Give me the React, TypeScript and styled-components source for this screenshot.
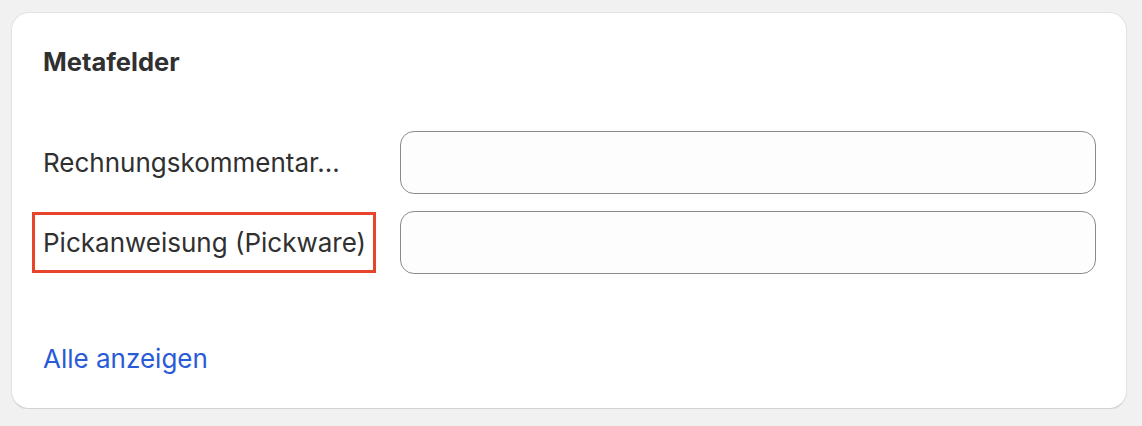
import React from "react";
import styled, { createGlobalStyle } from "styled-components";

const GlobalStyle = createGlobalStyle`
  html, body {
    margin: 0;
    padding: 0;
    background: #f1f1f1;
    font-family: Inter, "Noto Sans", "Liberation Sans", sans-serif;
    -webkit-font-smoothing: antialiased;
  }
`;

const Page = styled.div`
  padding: 12px 15px 0 11px;
`;

const Card = styled.section`
  box-sizing: border-box;
  width: 1116px;
  height: 397px;
  background: #ffffff;
  border: 1px solid #e3e3e3;
  border-bottom-color: #d2d2d2;
  border-radius: 18px;
  box-shadow: 0 1px 1px rgba(0, 0, 0, 0.06);
  padding: 29px 30px 0 31px;
  display: flex;
  flex-direction: column;
`;

const Heading = styled.h2`
  margin: 0;
  font-size: 25.5px;
  line-height: 40px;
  font-weight: 650;
  color: #303030;
`;

const Fields = styled.div`
  display: flex;
  flex-direction: column;
  gap: 17px;
  margin-top: 49px;
`;

const Row = styled.div`
  display: grid;
  grid-template-columns: 357px 1fr;
  align-items: center;
`;

const Label = styled.label<{ $highlighted?: boolean }>`
  position: relative;
  justify-self: start;
  font-size: 26px;
  line-height: 40px;
  color: #303030;
  white-space: nowrap;

  ${(p) =>
    p.$highlighted &&
    `
    &::after {
      content: "";
      position: absolute;
      left: -11px;
      right: -10px;
      top: -11px;
      bottom: -10px;
      border: 3px solid #e8432b;
    }
  `}
`;

const Input = styled.input`
  box-sizing: border-box;
  width: 696px;
  height: 63px;
  border: 1px solid #8a8a8a;
  border-radius: 14px;
  background: #fdfdfd;
  font: inherit;
  font-size: 26px;
  padding: 0 18px;
  outline: none;
`;

const Link = styled.a`
  margin-top: 65px;
  font-size: 26px;
  line-height: 40px;
  color: #2a5bd7;
  text-decoration: none;
  align-self: flex-start;
  cursor: pointer;
`;

export default function App() {
  return (
    <>
      <GlobalStyle />
      <Page>
        <Card>
          <Heading>Metafelder</Heading>
          <Fields>
            <Row>
              <Label>Rechnungskommentar...</Label>
              <Input type="text" />
            </Row>
            <Row>
              <Label $highlighted>Pickanweisung (Pickware)</Label>
              <Input type="text" />
            </Row>
          </Fields>
          <Link>Alle anzeigen</Link>
        </Card>
      </Page>
    </>
  );
}
